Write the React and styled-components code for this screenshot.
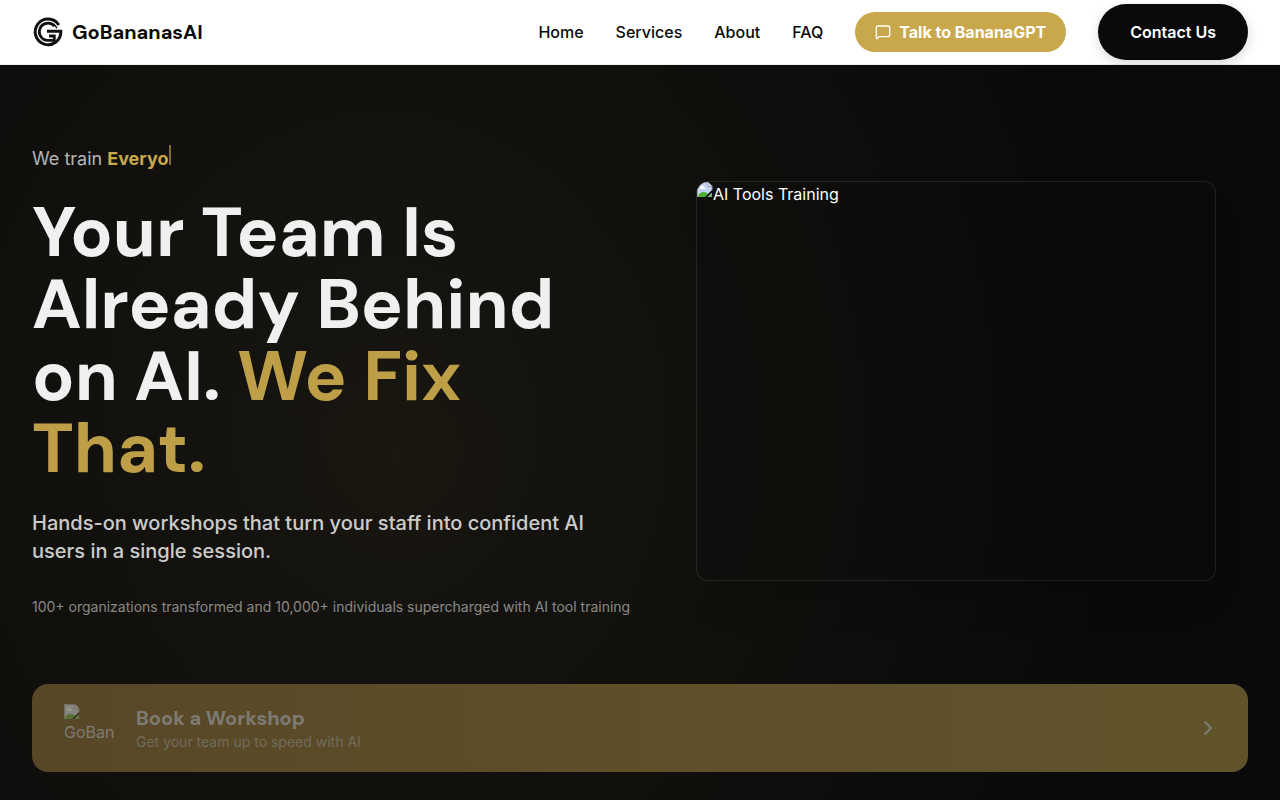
import React from "react";
import styled, { createGlobalStyle } from "styled-components";
import { MessageSquare, ChevronRight } from "lucide-react";

const body = `Inter, "Liberation Sans", sans-serif`;
const display = `"DM Sans", Inter, "Liberation Sans", sans-serif`;
const gold = "#c9a84c";
const ink = "#0a0a0a";

const GlobalStyle = createGlobalStyle`
  *, *::before, *::after { box-sizing: border-box; }
  body {
    margin: 0;
    background: ${ink};
    color: #ffffff;
    font-family: ${body};
    font-size: 16px;
    line-height: 24px;
    -webkit-font-smoothing: antialiased;
  }
  h1, h2, p, figure { margin: 0; }
  a { color: inherit; text-decoration: none; }
`;

const Page = styled.div`
  display: flex;
  flex-direction: column;
  min-height: 100vh;
`;

const Header = styled.header`
  background: #ffffff;
  color: ${ink};
  border-bottom: 1px solid #f0f0f0;
`;

const Bar = styled.div`
  display: flex;
  align-items: center;
  justify-content: space-between;
  height: 64px;
  max-width: 1280px;
  margin: 0 auto;
  padding: 0 32px;
`;

const Brand = styled.a`
  display: flex;
  align-items: center;
  gap: 8px;
  font-family: ${display};
  font-size: 20px;
  line-height: 28px;
  font-weight: 700;
`;

const Nav = styled.nav`
  display: flex;
  align-items: center;
  gap: 32px;
`;

const NavLink = styled.a`
  font-weight: 500;
`;

const PillButton = styled.button`
  display: inline-flex;
  align-items: center;
  gap: 8px;
  border: 0;
  border-radius: 999px;
  font: ${(p) => (p.$large ? 600 : 700)} 16px/24px ${body};
  color: #ffffff;
  cursor: pointer;
  padding: ${(p) => (p.$large ? "16px 32px" : "8px 20px")};
  background: ${(p) => (p.$large ? ink : gold)};
  box-shadow: ${(p) => (p.$large ? "0 4px 12px rgba(0, 0, 0, 0.15)" : "none")};
`;

const Hero = styled.main`
  flex: 1;
  background:
    radial-gradient(circle 200px at 31% 53%, rgba(120, 50, 0, 0.05), transparent 60%),
    radial-gradient(ellipse 58% 115% at 30% 50%, rgba(201, 180, 100, 0.065), transparent 100%),
    ${ink};
`;

const Container = styled.div`
  max-width: 1280px;
  margin: 0 auto;
  padding: 80px 32px 28px;
`;

const Columns = styled.div`
  display: grid;
  grid-template-columns: repeat(2, minmax(0, 1fr));
  align-items: center;
  gap: 48px;
`;

const Copy = styled.div`
  display: flex;
  flex-direction: column;
  gap: 24px;
`;

const Typed = styled.p`
  font-size: 18px;
  line-height: 28px;
  color: rgba(255, 255, 255, 0.7);
`;

const TypedWord = styled.span`
  font-weight: 700;
  color: ${gold};
`;

const Caret = styled.span`
  display: inline-block;
  width: 2px;
  height: 20px;
  background: rgba(201, 168, 76, 0.6);
`;

const Title = styled.h1`
  font-family: ${display};
  font-size: 70px;
  line-height: 72px;
  font-weight: 700;
  color: #f0f0f0;
`;

const Accent = styled.span`
  color: #be9f48;
`;

const Lead = styled.p`
  font-size: 20px;
  line-height: 28px;
  font-weight: 500;
  color: rgba(255, 255, 255, 0.8);
`;

const Proof = styled.p`
  margin-top: 8px;
  font-size: 14px;
  line-height: 20px;
  color: rgba(255, 255, 255, 0.5);
  white-space: nowrap;
`;

const Media = styled.figure`
  display: flex;
  align-items: flex-start;
  height: 400px;
  margin: 0 32px;
  overflow: hidden;
  border: 1px solid rgba(255, 255, 255, 0.1);
  border-radius: 12px;
  background: rgba(10, 10, 10, 0.2);
  box-shadow: 0 24px 40px -12px rgba(0, 0, 0, 0.2);
`;

const Cta = styled.a`
  display: flex;
  align-items: center;
  gap: 24px;
  min-height: 88px;
  margin-top: 67px;
  padding: 20px 28px 20px 32px;
  border-radius: 16px;
  background: linear-gradient(90deg, #574727, #5e4f29 50%, #60532a);
  color: #7e7b75;
`;

const Avatar = styled.div`
  width: 48px;
  height: 48px;
  white-space: nowrap;
`;

const AvatarIcon = styled.div`
  height: 16px;
  opacity: 0.42;
`;

const CtaText = styled.div`
  flex: 1;
`;

const CtaTitle = styled.h2`
  font-family: ${display};
  font-size: 20px;
  line-height: 28px;
  font-weight: 700;
`;

const CtaNote = styled.p`
  font-size: 14px;
  line-height: 20px;
  color: #716b5c;
`;

const IconSvg = styled.svg`
  display: block;
  flex-shrink: 0;
`;

function Logo() {
  return (
    <IconSvg width="32" height="32" viewBox="0 0 32 32" fill="none" stroke="#111111" aria-hidden="true">
      <path d="M26.800 9A12.800 12.800 0 1 0 28.800 15.200H15" strokeWidth="3" />
      <path d="M25 12.200A10 10 0 0 0 7.500 11.500" strokeWidth="1.400" />
      <path d="M22.500 10.200A8.600 8.600 0 1 0 16 24.400H22.300V20H17" strokeWidth="2.800" />
    </IconSvg>
  );
}

function BrokenImage() {
  return (
    <IconSvg width="16" height="16" viewBox="0 0 16 16" aria-hidden="true">
      <path d="M0 0h11l4 4v11H0z" fill="#c3d4f4" />
      <path d="M0.500 15V0.500H11L15 4.500V8" fill="none" stroke="#9aa0a8" />
      <path d="M11 0.500v4h4z" fill="#ffffff" stroke="#9aa0a8" />
      <path d="M3 6a2 2 0 0 1 4-1 1.500 1.500 0 0 1 1 2H3z" fill="#ffffff" />
      <path d="M1 15c0-3 3-5 6-5 2 0 3 1 4 2l-3 3z" fill="#4fae34" />
      <path d="M8 15l7-7v2.500L10.500 15z" fill={ink} />
      <path d="M11 15l4-4v4z" fill="#6fbd55" />
    </IconSvg>
  );
}

export default function App() {
  return (
    <Page>
      <GlobalStyle />
      <Header>
        <Bar>
          <Brand href="#">
            <Logo />
            GoBananasAI
          </Brand>
          <Nav>
            <NavLink href="#home">Home</NavLink>
            <NavLink href="#services">Services</NavLink>
            <NavLink href="#about">About</NavLink>
            <NavLink href="#faq">FAQ</NavLink>
            <PillButton type="button">
              <MessageSquare size={16} />
              Talk to BananaGPT
            </PillButton>
            <PillButton type="button" $large>
              Contact Us
            </PillButton>
          </Nav>
        </Bar>
      </Header>
      <Hero>
        <Container>
          <Columns>
            <Copy>
              <Typed>
                We train <TypedWord>Everyo</TypedWord>
                <Caret />
              </Typed>
              <Title>
                Your Team Is Already Behind on AI. <Accent>We Fix That.</Accent>
              </Title>
              <Lead>Hands-on workshops that turn your staff into confident AI users in a single session.</Lead>
              <Proof>100+ organizations transformed and 10,000+ individuals supercharged with AI tool training</Proof>
            </Copy>
            <Media>
              <BrokenImage />
              AI Tools Training
            </Media>
          </Columns>
          <Cta href="#workshop">
            <Avatar>
              <AvatarIcon>
                <BrokenImage />
              </AvatarIcon>
              GoBan
            </Avatar>
            <CtaText>
              <CtaTitle>Book a Workshop</CtaTitle>
              <CtaNote>Get your team up to speed with AI</CtaNote>
            </CtaText>
            <ChevronRight size={24} />
          </Cta>
        </Container>
      </Hero>
    </Page>
  );
}
